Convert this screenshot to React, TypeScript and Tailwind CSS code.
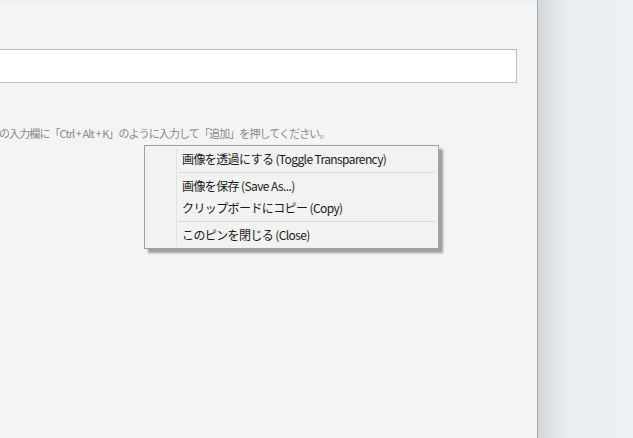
const jp = { fontFamily: '"Noto Sans CJK JP", "Noto Sans", sans-serif' };

const MenuItem = ({ label }: { label: string }) => (
  <div className="flex h-[22px] items-center">
    <div className="w-[32px] self-stretch border-r border-[#e2e2e2]" />
    <span className="pl-[5px] text-[12px] tracking-[-0.6px] text-[#1a1a1a]">{label}</span>
  </div>
);

const Sep = () => (
  <div className="flex h-[5px] items-center">
    <div className="w-[32px] self-stretch border-r border-[#e2e2e2]" />
    <div className="ml-[1px] mr-[3px] h-px flex-1 bg-[#d7d7d7]" />
  </div>
);

const ContextMenu = () => (
  <div
    className="absolute left-[144px] top-[145px] w-[295px] border border-[#a0a0a0] bg-[#f2f2f2] py-[2px] shadow-[4px_4px_2px_rgba(0,0,0,0.35)]"
    style={jp}
  >
    <MenuItem label="画像を透過にする (Toggle Transparency)" />
    <Sep />
    <MenuItem label="画像を保存 (Save As...)" />
    <MenuItem label="クリップボードにコピー (Copy)" />
    <Sep />
    <MenuItem label="このピンを閉じる (Close)" />
  </div>
);

export default function App() {
  return (
    <div className="relative flex h-[438px] w-[633px] overflow-hidden bg-[#f4f4f4]" style={jp}>
      <main className="flex h-full w-[538px] flex-col border-r border-[#a9abae] bg-[#f4f4f4]">
        <div className="h-[5px] bg-[#f0f1f3]" />
        <section className="flex flex-col pt-[44px]">
          <div className="ml-[-4px] mr-[20px] h-[34px] border border-[#bdbdbd] bg-white" />
          <p className="ml-[-1px] mt-[42px] whitespace-nowrap text-[11px] tracking-[-0.9px] text-[#8a8a8a]">
            の入力欄に「Ctrl + Alt + K」のように入力して「追加」を押してください。
          </p>
        </section>
      </main>
      <aside className="h-full flex-1 bg-gradient-to-r from-[#d3d6da] via-[#e9edf1] via-30% to-[#eef2f6]" />
      <ContextMenu />
    </div>
  );
}
